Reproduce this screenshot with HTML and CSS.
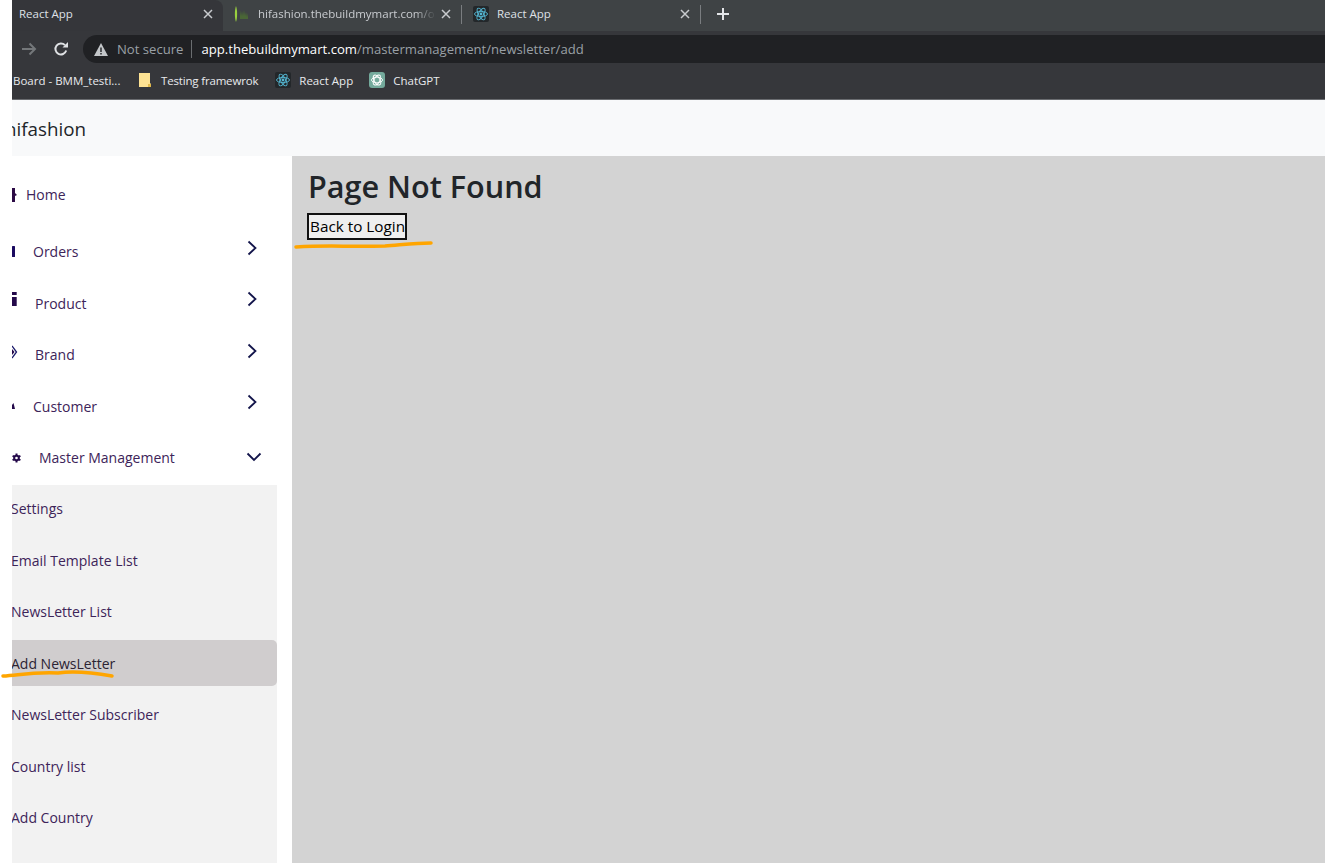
FILE: index.html
```html
<!DOCTYPE html>
<html lang="en">
<head>
  <meta charset="UTF-8">
  <meta name="viewport" content="width=device-width, initial-scale=1.0">
  <title>React App</title>
  <link rel="stylesheet" href="styles.css">
</head>
<body>
  <div class="window">

    <!-- Browser tabs -->
    <div class="tabs">
      <div class="tab tab-active">
        <span class="tab-title">React App</span>
        <svg class="tab-close" width="10" height="10" viewBox="0 0 10 10"><path d="M1 1l8 8M9 1l-8 8"/></svg>
      </div>
      <div class="tab tab-hifashion">
        <svg class="favicon" width="16" height="16" viewBox="0 0 16 16">
          <path d="M2 0c1.500 4 1.500 12 0 16-1.500-4-1.500-12 0-16z" fill="#9ad03f"/>
          <path d="M6 4l1 6 1-5 1 5 1-6 1 6 1-4 1 5 1-4v6H6z" fill="#4a6636"/>
        </svg>
        <span class="tab-title tab-fade">hifashion.thebuildmymart.com/or</span>
        <svg class="tab-close" width="10" height="10" viewBox="0 0 10 10"><path d="M1 1l8 8M9 1l-8 8"/></svg>
      </div>
      <div class="tab tab-react">
        <svg class="favicon" width="16" height="16" viewBox="0 0 16 16">
          <rect width="16" height="16" rx="2" fill="#23272a"/>
          <g fill="none" stroke="#55b8d4" stroke-width=".9">
            <ellipse cx="8" cy="8" rx="6.500" ry="2.600"/>
            <ellipse cx="8" cy="8" rx="6.500" ry="2.600" transform="rotate(60 8 8)"/>
            <ellipse cx="8" cy="8" rx="6.500" ry="2.600" transform="rotate(120 8 8)"/>
          </g>
          <circle cx="8" cy="8" r="1.400" fill="#55b8d4"/>
        </svg>
        <span class="tab-title">React App</span>
        <svg class="tab-close" width="10" height="10" viewBox="0 0 10 10"><path d="M1 1l8 8M9 1l-8 8"/></svg>
      </div>
      <svg class="new-tab" width="12" height="12" viewBox="0 0 12 12"><path d="M6 0v12M0 6h12"/></svg>
    </div>

    <!-- Address bar -->
    <div class="toolbar">
      <svg class="back" width="16" height="14" viewBox="0 0 16 14"><path d="M1 7h13M8.500 1.500L14 7l-5.500 5.500"/></svg>
      <svg class="reload" width="16" height="16" viewBox="0 0 16 16">
        <path d="M13.200 9.500A5.500 5.500 0 1 1 12 4.200" fill="none"/>
        <path class="reload-head" d="M9.500 6.500h5.500V1z"/>
      </svg>
      <div class="omnibox">
        <svg class="warn" width="14" height="13" viewBox="0 0 14 13"><path d="M7 0l7 13H0z" fill="#c3c6c9"/><path d="M6.300 4.500h1.400v4.500H6.300zM6.300 10h1.400v1.400H6.300z" fill="#202124"/></svg>
        <span class="secure">Not secure</span>
        <span class="url"><span class="url-host">app.thebuildmymart.com</span>/mastermanagement/newsletter/add</span>
      </div>
    </div>

    <!-- Bookmarks -->
    <div class="bookmarks">
      <span class="bookmark bookmark-first">Board - BMM_testi...</span>
      <span class="bookmark bookmark-folder">
        <svg width="12" height="14" viewBox="0 0 12 14"><path d="M0 0h11v10.500h1V14H0z" fill="#fde293"/><path d="M9 11h3v3H9z" fill="#e0b84a"/></svg>
        Testing framewrok
      </span>
      <span class="bookmark">
        <svg width="16" height="16" viewBox="0 0 16 16">
          <rect width="16" height="16" rx="2" fill="#23272a"/>
          <g fill="none" stroke="#55b8d4" stroke-width=".9">
            <ellipse cx="8" cy="8" rx="6.500" ry="2.600"/>
            <ellipse cx="8" cy="8" rx="6.500" ry="2.600" transform="rotate(60 8 8)"/>
            <ellipse cx="8" cy="8" rx="6.500" ry="2.600" transform="rotate(120 8 8)"/>
          </g>
          <circle cx="8" cy="8" r="1.400" fill="#55b8d4"/>
        </svg>
        React App
      </span>
      <span class="bookmark">
        <svg width="16" height="16" viewBox="0 0 16 16">
          <rect width="16" height="16" rx="3" fill="#74aa9c"/>
          <g fill="none" stroke="#fff" stroke-width=".9">
            <ellipse cx="8" cy="8" rx="5.500" ry="2.800"/>
            <ellipse cx="8" cy="8" rx="5.500" ry="2.800" transform="rotate(60 8 8)"/>
            <ellipse cx="8" cy="8" rx="5.500" ry="2.800" transform="rotate(120 8 8)"/>
          </g>
        </svg>
        ChatGPT
      </span>
    </div>

    <!-- App -->
    <div class="navbar"><span class="brand">hifashion</span></div>
    <div class="app">
      <div class="sidebar">
        <div class="nav-item nav-home">
          <svg class="nav-icon" width="14" height="16" viewBox="0 0 14 16"><path d="M7 1h3v5l2 2-2 1v6H7z" fill="#2c0a45"/></svg>
          <span class="nav-label label-home">Home</span>
        </div>
        <div class="nav-item">
          <svg class="nav-icon" width="14" height="16" viewBox="0 0 14 16"><rect x="7" y="2" width="3" height="11" rx=".5" fill="#1b0a60"/></svg>
          <span class="nav-label label-orders">Orders</span>
          <svg class="chevron" width="10" height="16" viewBox="0 0 10 16"><path d="M1.500 1.500L8.500 8l-7 6.500"/></svg>
        </div>
        <div class="nav-item">
          <svg class="nav-icon" width="14" height="16" viewBox="0 0 14 16"><path d="M7 -3h4.700v3H7zM7 2h4.700v9H7z" fill="#24094a"/></svg>
          <span class="nav-label label-product">Product</span>
          <svg class="chevron" width="10" height="16" viewBox="0 0 10 16"><path d="M1.500 1.500L8.500 8l-7 6.500"/></svg>
        </div>
        <div class="nav-item">
          <svg class="nav-icon" width="14" height="16" viewBox="0 0 14 16"><path d="M7 -1l4.500 6-4.500 6" fill="none" stroke="#1b1a6b" stroke-width="1.300"/><path d="M7 2l2.500 3L7 8z" fill="#24094a"/></svg>
          <span class="nav-label label-product">Brand</span>
          <svg class="chevron" width="10" height="16" viewBox="0 0 10 16"><path d="M1.500 1.500L8.500 8l-7 6.500"/></svg>
        </div>
        <div class="nav-item">
          <svg class="nav-icon" width="14" height="16" viewBox="0 0 14 16"><path d="M7 7l1.500-2 1.500 6H7z" fill="#24094a"/></svg>
          <span class="nav-label label-orders">Customer</span>
          <svg class="chevron" width="10" height="16" viewBox="0 0 10 16"><path d="M1.500 1.500L8.500 8l-7 6.500"/></svg>
        </div>
        <div class="nav-item">
          <svg class="nav-icon" width="14" height="16" viewBox="0 0 14 16">
            <path d="M11.500 3.500v9M7.600 5.750l7.800 4.500M7.600 10.250l7.800-4.500" stroke="#24094a" stroke-width="2"/>
            <circle cx="11.500" cy="8" r="3.300" fill="#24094a"/>
            <circle cx="11.500" cy="8" r="1.300" fill="#fff"/>
          </svg>
          <span class="nav-label label-master">Master Management</span>
          <svg class="chevron chevron-down" width="16" height="10" viewBox="0 0 16 10"><path d="M1.500 1.500L8 8l6.500-6.500"/></svg>
        </div>
        <div class="nav-sub">
          <div class="sub-item">Settings</div>
          <div class="sub-item">Email Template List</div>
          <div class="sub-item">NewsLetter List</div>
          <div class="sub-item sub-active">Add NewsLetter</div>
          <div class="sub-item">NewsLetter Subscriber</div>
          <div class="sub-item">Country list</div>
          <div class="sub-item">Add Country</div>
        </div>
      </div>
      <div class="content">
        <h1>Page Not Found</h1>
        <button class="back-login">Back to Login</button>
      </div>
    </div>
  </div>

  <!-- Orange marker strokes drawn over the screenshot -->
  <svg class="scribble" width="1325" height="863" viewBox="0 0 1325 863">
    <path d="M3 676C20 675 30 672 58 673C72 671 95 673 112 676"/>
    <path d="M296 247C330 245 345 247 385 246C400 245 415 243 431 243"/>
  </svg>
</body>
</html>
```

FILE: styles.css
```css
html, body {
  height: 100%;
}
body {
  margin: 0;
  background: #fff;
  overflow: hidden;
  position: relative;
  font-family: "Open Sans", "Noto Sans", sans-serif;
}
.window {
  margin-left: 12px;
  height: 100%;
  display: flex;
  flex-direction: column;
  overflow: hidden;
}

/* browser chrome */
.tabs {
  height: 31px;
  flex: none;
  display: flex;
  align-items: center;
  background: #3f4345;
  color: #dee1e6;
  font-size: 11.500px;
}
.tab {
  height: 31px;
  display: flex;
  align-items: center;
  flex: none;
  box-sizing: border-box;
}
.tab-active {
  width: 211px;
  padding: 0 0 3px 7px;
  background: #35363a;
  border-radius: 0 8px 0 0;
}
.tab-hifashion {
  width: 239px;
  padding-left: 11px;
  border-right: 1px solid #7a7d80;
  height: 19px;
  margin-bottom: 3px;
}
.tab-react {
  width: 239px;
  padding-left: 11px;
  border-right: 1px solid #7a7d80;
  height: 19px;
  margin-bottom: 3px;
}
.tab-title {
  flex: 1;
  white-space: nowrap;
  overflow: hidden;
  margin-top: -1px;
}
.tab-fade {
  margin-right: 5px;
  color: #c9ccd0;
  -webkit-mask-image: linear-gradient(to right, #000 88%, transparent);
  mask-image: linear-gradient(to right, #000 88%, transparent);
}
.favicon {
  flex: none;
  margin-right: 8px;
}
.tab-close {
  flex: none;
  margin-right: 10px;
  fill: none;
  stroke: #c8cbce;
  stroke-width: 1.500;
}
.new-tab {
  margin: 0 0 3px 16px;
  fill: none;
  stroke: #e3e5e8;
  stroke-width: 2;
}
.toolbar {
  height: 32px;
  flex: none;
  box-sizing: border-box;
  padding-top: 4px;
  display: flex;
  align-items: center;
  background: #36373b;
}
.back {
  margin-left: 9px;
  fill: none;
  stroke: #74777a;
  stroke-width: 2;
}
.reload {
  margin-left: 16px;
  stroke: #dfe1e4;
  stroke-width: 2;
}
.reload-head {
  fill: #dfe1e4;
  stroke: none;
}
.omnibox {
  flex: 1;
  height: 28px;
  margin-left: 14px;
  padding-left: 11px;
  display: flex;
  align-items: center;
  background: #202124;
  border-radius: 14px 0 0 14px;
  font-size: 13.120px;
  color: #9aa0a6;
  white-space: nowrap;
}
.secure {
  margin-left: 9px;
  padding-right: 8px;
  border-right: 1px solid #6a6d70;
  line-height: 18px;
}
.url {
  margin-left: 9px;
}
.url-host {
  color: #fff;
}
.bookmarks {
  height: 37px;
  flex: none;
  box-sizing: border-box;
  padding-bottom: 2px;
  border-bottom: 1px solid #6a6c70;
  display: flex;
  align-items: center;
  background: #36373b;
  color: #e8eaed;
  font-size: 11.500px;
  white-space: nowrap;
}
.bookmark {
  display: flex;
  align-items: center;
  gap: 8px;
  margin-right: 16px;
}
.bookmark-first {
  margin-left: 1px;
  width: 110px;
  margin-right: 16px;
}
.bookmark-folder {
  gap: 10px;
  margin-right: 17px;
  letter-spacing: -.17px;
}

/* app shell */
.navbar {
  height: 56px;
  flex: none;
  box-sizing: border-box;
  padding-top: 2px;
  display: flex;
  align-items: center;
  background: #f8f9fa;
}
.brand {
  margin-left: -7px;
  font-size: 18.800px;
  color: #212529;
}
.app {
  flex: 1;
  display: flex;
  min-height: 0;
}
.sidebar {
  width: 280px;
  flex: none;
  box-sizing: border-box;
  padding: 14px 15px 0 0;
  display: flex;
  flex-direction: column;
  overflow: hidden;
  color: #3d2459;
  font-size: 14px;
}
.nav-item {
  height: 51.500px;
  flex: none;
  display: flex;
  align-items: center;
}
.nav-home {
  height: 56px;
  box-sizing: border-box;
  padding-bottom: 7px;
}
.nav-icon {
  flex: none;
  margin-left: -7px;
  overflow: visible;
}
.nav-label {
  flex: 1;
}
.label-home {
  margin-left: 7px;
}
.label-orders {
  margin-left: 14px;
}
.label-product {
  margin-left: 16px;
}
.label-master {
  margin-left: 20px;
}
.chevron {
  flex: none;
  margin: -8px 20px 0 0;
  fill: none;
  stroke: #12144a;
  stroke-width: 1.800;
}
.chevron-down {
  margin: -2px 15px 0 0;
}
.nav-sub {
  flex: 1;
  margin-top: 1.500px;
  padding-top: .5px;
  background: #f2f2f2;
}
.sub-item {
  height: 46px;
  margin-bottom: 5.500px;
  display: flex;
  align-items: center;
  text-indent: -1px;
  white-space: nowrap;
}
.sub-active {
  background: #d0cdce;
  border-radius: 0 5px 5px 0;
  color: #2b2333;
}
.content {
  flex: 1;
  padding: 9px 16px;
  background: #d3d3d3;
}
.content h1 {
  margin: 0 0 6px;
  font-size: 30.600px;
  line-height: 42px;
  font-weight: 600;
  color: #212529;
}
.back-login {
  display: block;
  margin-left: -1px;
  padding: 0 1px 2px;
  width: 100px;
  height: 27px;
  background: #efefef;
  border: 2px solid #111;
  font-family: inherit;
  font-size: 15.300px;
  white-space: nowrap;
  color: #000;
}

/* marker strokes over the page */
.scribble {
  position: absolute;
  top: 0;
  left: 0;
  pointer-events: none;
  fill: none;
  stroke: #ffa500;
  stroke-width: 3.500;
  stroke-linecap: round;
}
```
